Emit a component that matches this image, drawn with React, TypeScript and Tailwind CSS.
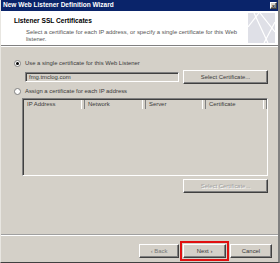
import { type FunctionComponent } from "react";

const raised =
  "border border-t-white border-l-white border-r-[#404040] border-b-[#404040] shadow-[inset_-1px_-1px_0_#808080]";

const columns = [
  { label: "IP Address", width: "w-[61px]" },
  { label: "Network", width: "w-[61px]" },
  { label: "Server", width: "w-[60px]" },
  { label: "Certificate", width: "w-[61px]" },
];

const Radio: FunctionComponent<{ checked?: boolean }> = ({ checked }) => (
  <div className="w-[7px] h-[7px] rounded-full bg-white border border-[#808080] flex items-center justify-center shrink-0">
    {checked ? <div className="w-[3px] h-[3px] rounded-full bg-black" /> : null}
  </div>
);

const Logo = () => (
  <svg width="27" height="30" viewBox="0 0 27 30">
    <rect width="27" height="30" fill="#dfe0e7" />
    <path d="M6 0 L20 30 M12 0 L27 19 M0 14 L11 0 M16 30 L27 9" stroke="#ffffff" strokeWidth="1.2" fill="none" />
  </svg>
);

const App = () => {
  return (
    <div className="w-[280px] h-[263px] bg-[#d4d0c8] flex flex-col border-l border-l-[#e8e6e1] border-r-2 border-r-[#808080] border-b border-b-[#404040] font-['Liberation_Sans',Arial,sans-serif] text-[#3a3a3a] overflow-hidden">
      {/* title bar */}
      <div className="h-[11px] bg-[#0a246a] flex items-center justify-between pl-[2px] pr-[1px]">
        <span className="text-white font-bold text-[6.5px] leading-none">New Web Listener Definition Wizard</span>
        <div className={`w-[7px] h-[7px] bg-[#d4d0c8] flex items-center justify-center text-black text-[6px] leading-none ${raised}`}>
          ×
        </div>
      </div>

      {/* header */}
      <div className="h-[34px] bg-white flex justify-between items-center pr-[3px]">
        <div className="flex flex-col self-start pt-[7px] pl-[13px]">
          <span className="text-black font-bold text-[6.6px] leading-[6px]">Listener SSL Certificates</span>
          <div className="pl-[12px] pt-[5px] text-[#555] text-[5.9px] leading-[7px] w-[232px]">
            Select a certificate for each IP address, or specify a single certificate for this Web listener.
          </div>
        </div>
        <Logo />
      </div>
      <div className="h-[2px] border-t border-t-[#808080] border-b border-b-white" />

      {/* body */}
      <div className="flex flex-col pl-[13px] pr-[10px] text-[5.9px]">
        <div className="flex items-center gap-[4px] mt-[12px] h-[8px]">
          <Radio checked />
          <span>Use a single certificate for this Web Listener</span>
        </div>
        <div className="flex items-center justify-between pl-[11px] mt-[3px] h-[14px]">
          <div className="w-[154px] h-[10px] border border-t-[#808080] border-l-[#808080] border-r-white border-b-white shadow-[inset_1px_1px_0_#404040] flex items-center pl-[3px]">
            fmg.tmclog.com
          </div>
          <div className={`w-[85px] h-[14px] flex items-center justify-center ${raised}`}>Select Certificate...</div>
        </div>
        <div className="flex items-center gap-[4px] mt-[3px] h-[8px]">
          <Radio />
          <span>Assign a certificate for each IP address</span>
        </div>
        <div className="ml-[8px] mt-[3px] h-[78px] border border-t-[#808080] border-l-[#808080] border-r-white border-b-white shadow-[inset_1px_1px_0_#404040] flex flex-col">
          <div className="flex h-[10px] pl-[1px] pt-[1px]">
            {columns.map((c) => (
              <div
                key={c.label}
                className={`${c.width} h-[9px] flex items-center pl-[3px] border-r border-r-[#808080] shadow-[inset_-2px_0_0_#d4d0c8,inset_-3px_0_0_#ffffff]`}
              >
                {c.label}
              </div>
            ))}
          </div>
        </div>
        <div className="flex justify-end mt-[3px]">
          <div className={`w-[85px] h-[14px] flex items-center justify-center text-[#a0a0a0] [text-shadow:1px_1px_0_#ffffff] ${raised}`}>
            Select Certificate...
          </div>
        </div>
      </div>

      <div className="flex-1" />
      <div className="h-[2px] border-t border-t-[#a0a0a0] border-b border-b-white" />
      <div className="h-[26px] flex items-start justify-end gap-[4px] pr-[6px] pt-[5px] text-[5.9px]">
        <div className={`w-[40px] h-[14px] mt-[3px] flex items-center justify-center text-[#777] ${raised}`}>‹ Back</div>
        <div className="border-2 border-[#e01010] p-[1px] -mx-[3px]">
          <div className={`w-[43px] h-[14px] flex items-center justify-center ${raised}`}>Next ›</div>
        </div>
        <div className={`w-[42px] h-[14px] mt-[3px] flex items-center justify-center ${raised}`}>Cancel</div>
      </div>
    </div>
  );
};

export default App;
